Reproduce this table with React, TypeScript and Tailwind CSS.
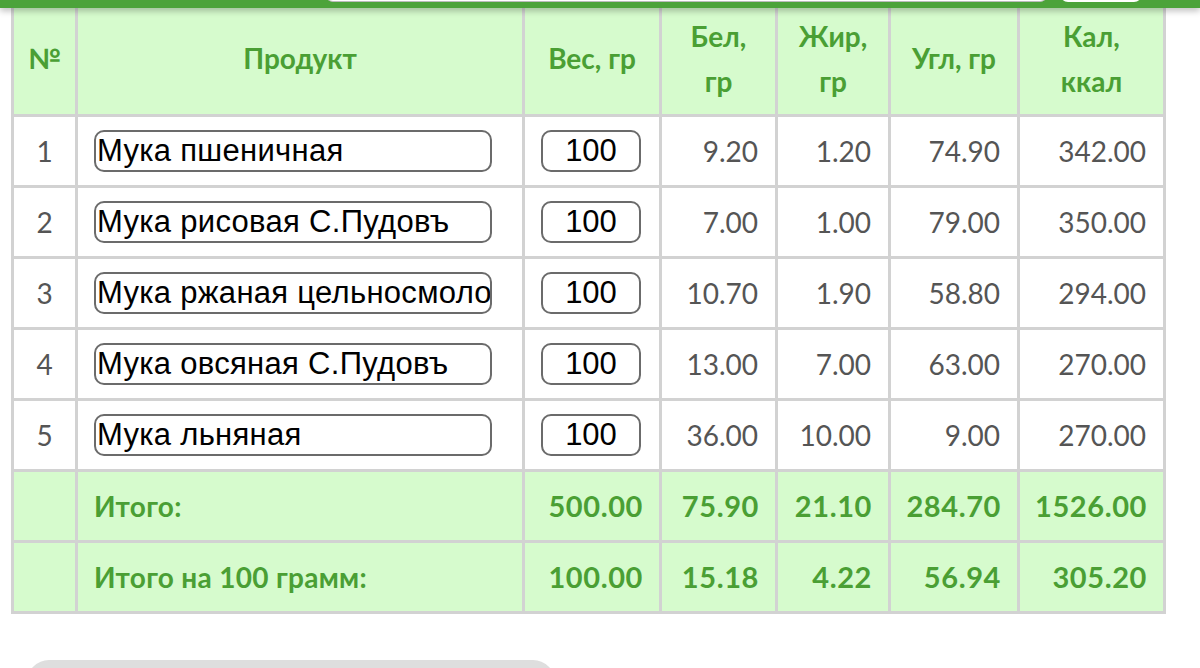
const rows = [
  { n: 1, name: "Мука пшеничная", w: "100", b: "9.20", f: "1.20", u: "74.90", k: "342.00" },
  { n: 2, name: "Мука рисовая С.Пудовъ", w: "100", b: "7.00", f: "1.00", u: "79.00", k: "350.00" },
  { n: 3, name: "Мука ржаная цельносмолотая", w: "100", b: "10.70", f: "1.90", u: "58.80", k: "294.00" },
  { n: 4, name: "Мука овсяная С.Пудовъ", w: "100", b: "13.00", f: "7.00", u: "63.00", k: "270.00" },
  { n: 5, name: "Мука льняная", w: "100", b: "36.00", f: "10.00", u: "9.00", k: "270.00" },
];

const totals = [
  { label: "Итого:", w: "500.00", b: "75.90", f: "21.10", u: "284.70", k: "1526.00" },
  { label: "Итого на 100 грамм:", w: "100.00", b: "15.18", f: "4.22", u: "56.94", k: "305.20" },
];

const th = "border-[3px] border-[#d2d2d2] text-[#4a9f34] font-bold text-[28px] leading-[45px] text-center align-middle";
const td = "border-[3px] border-[#d2d2d2] h-[71px] align-middle";
const num = "text-right pr-[17px] text-[#555] text-[28px] font-normal";
const tot = "text-right pr-[16px] text-[#4a9f34] text-[29px] font-bold tracking-[0.6px]";

export default function App() {
  return (
    <main className="relative w-[1200px] h-[668px] overflow-hidden bg-white font-['Lato',sans-serif]">
      {/* top bar */}
      <div className="absolute top-0 left-0 right-0 z-10 h-[8px] bg-[#4ca33a] shadow-[0_3px_6px_rgba(0,0,0,0.25)]">
        <div className="absolute left-[325px] w-[723px] -top-[20px] h-[22px] rounded-b-[8px] bg-white border border-[#bbb]" />
        <div className="absolute left-[1060px] w-[82px] -top-[20px] h-[22px] rounded-b-[8px] bg-white" />
      </div>

      <table className="ml-[11px] border-collapse table-fixed w-[1152px]">
        <colgroup>
          <col className="w-[64px]" />
          <col className="w-[447px]" />
          <col className="w-[137px]" />
          <col className="w-[116px]" />
          <col className="w-[113px]" />
          <col className="w-[129px]" />
          <col className="w-[146px]" />
        </colgroup>
        <thead>
          <tr className="bg-[#d6fbcd] h-[114px]">
            <th className={th}>№</th>
            <th className={th}>Продукт</th>
            <th className={th}>Вес, гр</th>
            <th className={th}>Бел,<br />гр</th>
            <th className={th}>Жир,<br />гр</th>
            <th className={th}>Угл, гр</th>
            <th className={th}>Кал,<br />ккал</th>
          </tr>
        </thead>
        <tbody>
          {rows.map((r) => (
            <tr key={r.n}>
              <td className={`${td} text-center text-[#555] text-[28px]`}>{r.n}</td>
              <td className={`${td} px-4`}>
                <input
                  readOnly
                  value={r.name}
                  className="w-[398px] h-[42px] pl-[1px] rounded-[10px] border-2 border-[#6b6b6b] bg-white text-black text-[31px] tracking-[0.3px] font-['Liberation_Sans',sans-serif] outline-none"
                />
              </td>
              <td className={`${td} px-4`}>
                <input
                  readOnly
                  value={r.w}
                  className="w-[100px] h-[42px] rounded-[10px] border-2 border-[#6b6b6b] bg-white text-black text-center text-[31px] font-['Liberation_Sans',sans-serif] outline-none"
                />
              </td>
              <td className={`${td} ${num}`}>{r.b}</td>
              <td className={`${td} ${num}`}>{r.f}</td>
              <td className={`${td} ${num}`}>{r.u}</td>
              <td className={`${td} ${num}`}>{r.k}</td>
            </tr>
          ))}
          {totals.map((t) => (
            <tr key={t.label} className="bg-[#d6fbcd]">
              <td className={td}></td>
              <td className={`${td} pl-4 text-[#4a9f34] text-[28px] font-bold tracking-[0.3px]`}>{t.label}</td>
              <td className={`${td} ${tot}`}>{t.w}</td>
              <td className={`${td} ${tot}`}>{t.b}</td>
              <td className={`${td} ${tot}`}>{t.f}</td>
              <td className={`${td} ${tot}`}>{t.u}</td>
              <td className={`${td} ${tot}`}>{t.k}</td>
            </tr>
          ))}
        </tbody>
      </table>

      <div className="mt-[46px] ml-[27px] w-[528px] h-[40px] rounded-t-[22px] bg-[#dedede]" />
    </main>
  );
}
